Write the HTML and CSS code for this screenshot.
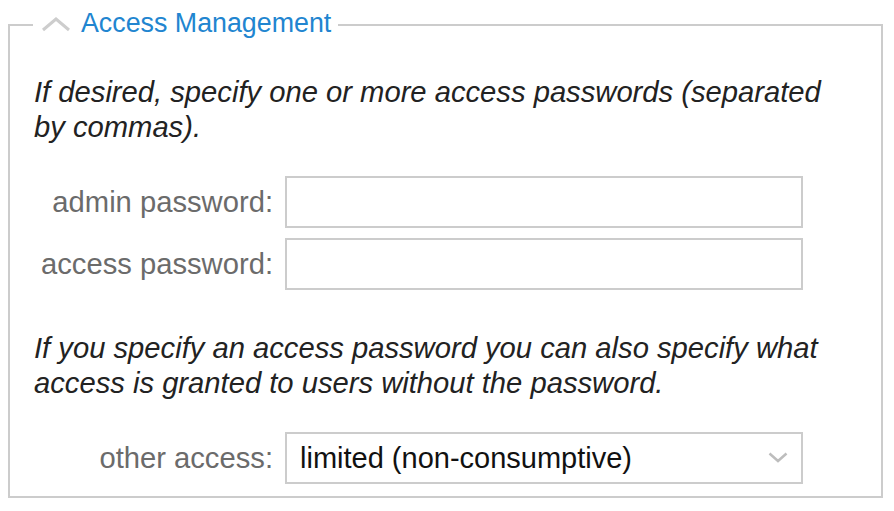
FILE: index.html
```html
<!DOCTYPE html>
<html lang="en">
<head>
<meta charset="utf-8">
<title>Access Management</title>
<link rel="stylesheet" href="styles.css">
</head>
<body>
<fieldset class="panel">
  <legend class="panel-legend">
    <svg class="legend-chevron" width="30" height="16" viewBox="0 0 30 16" aria-hidden="true">
      <polyline points="2,14 15,3 28,14" fill="none" stroke="#cdcdcd" stroke-width="3"/>
    </svg>
    <span class="legend-text">Access Management</span>
  </legend>
  <p class="note note-first">If desired, specify one or more access passwords (separated by commas).</p>
  <div class="form-grid">
    <label class="field-label" for="admin">admin password:</label>
    <input class="field-input" id="admin" type="text">
    <label class="field-label" for="access">access password:</label>
    <input class="field-input" id="access" type="text">
  </div>
  <p class="note note-second">If you specify an access password you can also specify what access is granted to users without the password.</p>
  <div class="form-grid form-grid-select">
    <label class="field-label" for="other">other access:</label>
    <div class="select-wrap">
      <select class="field-select" id="other">
        <option>limited (non-consumptive)</option>
      </select>
      <svg class="select-chevron" width="20" height="11" viewBox="0 0 20 11" aria-hidden="true">
        <polyline points="1.5,1.5 10,9 18.5,1.5" fill="none" stroke="#bdbdbd" stroke-width="2.5"/>
      </svg>
    </div>
  </div>
</fieldset>
</body>
</html>
```
FILE: styles.css
```css
html, body {
  margin: 0;
  padding: 0;
  background: #ffffff;
}

body {
  font-family: "Liberation Sans", Arial, sans-serif;
  color: #222222;
}

.panel {
  margin: 10px 11px 0 8px;
  padding: 0 0 12px 0;
  border: 2px solid #cccccc;
  min-width: 0;
}

.panel-legend {
  margin-left: 23px;
  padding: 0 7px;
  height: 30px;
  display: flex;
  align-items: center;
  line-height: 30px;
}

.legend-chevron {
  display: block;
  margin-left: 1px;
  margin-right: 10px;
  margin-top: -3px;
}

.legend-text {
  font-size: 26.8px;
  color: #2185d0;
  margin-top: -5px;
}

.note {
  font-style: italic;
  font-size: 29.2px;
  line-height: 35px;
  color: #222222;
  margin: 0 36px 0 24px;
}

.note-first {
  margin-top: 35px;
}

.note-second {
  margin-top: 41px;
}

.form-grid {
  display: grid;
  grid-template-columns: 263px 518px;
  column-gap: 12px;
  row-gap: 10px;
  margin-top: 31px;
}

.form-grid-select {
  margin-top: 31px;
}

.field-label {
  text-align: right;
  font-size: 29.2px;
  color: #6b6b6b;
  align-self: center;
  white-space: nowrap;
}

.field-input,
.field-select {
  box-sizing: border-box;
  height: 52px;
  width: 518px;
  margin: 0;
  border: 2px solid #cccccc;
  border-radius: 0;
  background: #ffffff;
  outline: none;
}

.select-wrap {
  position: relative;
  width: 518px;
  height: 52px;
}

.field-select {
  appearance: none;
  -webkit-appearance: none;
  padding: 0 50px 0 13px;
  font-family: "Liberation Sans", Arial, sans-serif;
  font-size: 29px;
  color: #111111;
}

.select-chevron {
  position: absolute;
  right: 15px;
  top: 20px;
}
```
